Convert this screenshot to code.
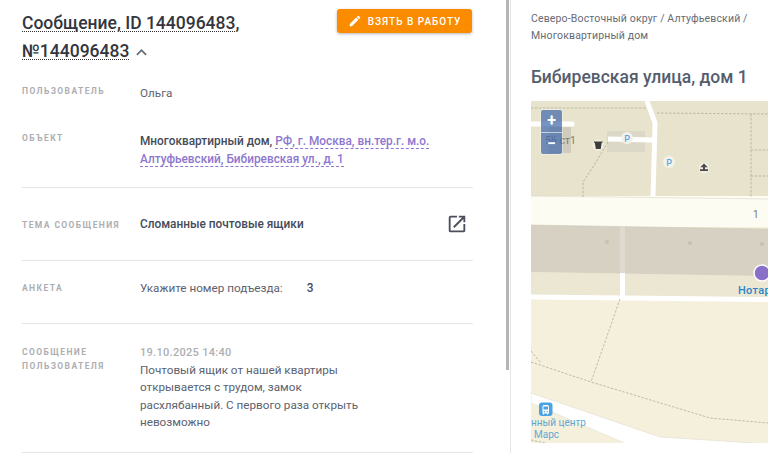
<div class="page">
  <section class="left">
    <header class="head">
      <h1><span class="dotted">Сообщение, ID 144096483, №144096483</span>
        <svg class="chev" viewBox="0 0 24 24" width="21" height="21"><path d="M7.41 15.41 12 10.83l4.59 4.58L18 14l-6-6-6 6z" fill="#666d78"/></svg>
      </h1>
      <button class="take">
        <svg viewBox="0 0 24 24" width="14" height="14"><path fill="#fff" d="M3 17.25V21h3.75L17.81 9.94l-3.75-3.75L3 17.25zM20.71 7.04a1 1 0 0 0 0-1.41l-2.34-2.34a1 1 0 0 0-1.41 0l-1.83 1.83 3.75 3.75 1.83-1.83z"/></svg>
        <span>Взять в работу</span>
      </button>
    </header>

    <div class="row r1">
      <div class="label">Пользователь</div>
      <div class="val">Ольга</div>
    </div>
    <div class="row r2 line">
      <div class="label">Объект</div>
      <div class="val"><b>Многоквартирный дом,</b> <a>РФ, г. Москва, вн.тер.г. м.о. Алтуфьевский, Бибиревская ул., д. 1</a></div>
    </div>
    <div class="row r3 line">
      <div class="label">Тема сообщения</div>
      <div class="val"><b>Сломанные почтовые ящики</b></div>
      <svg class="ext" viewBox="0 0 24 24" width="22" height="22"><path fill="#4a4f5c" d="M19 19H5V5h7V3H5a2 2 0 0 0-2 2v14a2 2 0 0 0 2 2h14a2 2 0 0 0 2-2v-7h-2v7zM14 3v2h3.59l-9.83 9.83 1.41 1.41L19 6.41V10h2V3h-7z"/></svg>
    </div>
    <div class="row r4 line">
      <div class="label">Анкета</div>
      <div class="val quiz"><span>Укажите номер подъезда:</span><b>3</b></div>
    </div>
    <div class="row r5 line">
      <div class="label">Сообщение пользователя</div>
      <div class="val msg">
        <div class="date">19.10.2025 14:40</div>
        Почтовый ящик от нашей квартиры открывается с трудом, замок расхлябанный. С первого раза открыть невозможно
      </div>
    </div>
    <div class="scroll"></div>
  </section>

  <aside class="right">
    <div class="crumbs">Северо-Восточный округ / Алтуфьевский / Многоквартирный дом</div>
    <h2>Бибиревская улица, дом 1</h2>
    <div class="map">
      <svg viewBox="0 0 237 342" width="237" height="342">
        <rect width="237" height="342" fill="#f4f0dc"/>
        <rect width="237" height="97" fill="#e8e3cd"/>
        <rect y="95" width="237" height="31" fill="#fdfcf3"/>
        <path d="M0 95 L237 98" stroke="#d9d5c4" stroke-width=".6"/>
        <path d="M0 171 L237 175 V197 L0 196Z" fill="#ece7d2"/>
        <path d="M0 124 L237 128 V175 L0 171Z" fill="#d6d1c2"/>
        <path d="M0 124 L237 128" stroke="#c9c4b5" stroke-width=".5"/>
        <rect x="89" y="125" width="5" height="47" fill="#dedad0"/>
        <rect x="89" y="172" width="5" height="24" fill="#fff"/>
        <path d="M0 196 L237 198.500" stroke="#fff" stroke-width="5"/>
        <circle cx="76" cy="141" r="2" fill="#c6c1b2"/><circle cx="159" cy="142" r="2" fill="#c6c1b2"/><circle cx="231" cy="143" r="2" fill="#c6c1b2"/>

        <rect x="76" y="30" width="38" height="21" fill="#dcd8c8"/>
        <rect x="18" y="26" width="22" height="26" fill="#cfcbbd"/>
        <path d="M116 0 L124 22 L122 96" stroke="#fff" stroke-width="5" fill="none"/>
        <path d="M0 23 H41" stroke="#fff" stroke-width="5" stroke-linecap="round"/>
        <path d="M77 38 L122 39" stroke="#fff" stroke-width="5"/>
        <g fill="none" stroke="#a8a494" stroke-width=".7" stroke-dasharray="2.500 1.500">
          <path d="M0 7 H115"/><path d="M126 12 L237 13"/>
          <path d="M220 13 V96"/><path d="M220 49 H237"/><path d="M220 75 H237"/>
          <path d="M77 41 L62 66 L52 81 V96"/>
          <path d="M89 198 L60 281"/>
          <path d="M0 261 L60 281 L179 317 L237 322"/>
          <path d="M0 250 L10 262"/>
          <path d="M0 339 L14 342"/>
        </g>
        <path d="M0 292 L129 336 L237 343 V350 H112 L0 302Z" fill="#fff" stroke="#dcd8c8" stroke-width=".5"/>

        <circle cx="96" cy="37" r="6" fill="#f4f2e8"/>
        <text x="96" y="40.500" class="park">P</text>
        <circle cx="138" cy="61" r="6" fill="#f4f2e8"/>
        <text x="138" y="64.500" class="park">P</text>
        <circle cx="67" cy="44" r="5.500" fill="#f4f2e8" opacity=".8"/>
        <path d="M63 40.500h8.500v1.200h-.8l-1 6.300h-4.900l-1-6.300H63z" fill="#3d3d3d"/>
        <circle cx="173" cy="67" r="5.500" fill="#f4f2e8" opacity=".7"/>
        <path d="M173 62.500l3.800 3.800h-2.800v2h3v1.700h-8v-1.700h3v-2h-2.800z" fill="#4a4a4a"/>
        <text x="14" y="42.500" class="bld">56 ст1</text>
        <text x="222" y="117" class="num">1</text>
        <circle cx="231" cy="172" r="8" fill="#8a6fc9" stroke="#fff" stroke-width="1.500"/>
        <text x="207" y="193" class="poi">Нотар</text>
        <rect x="8" y="301.500" width="13.500" height="13.500" rx="3" fill="#4ba3e3"/>
        <path d="M11.500 305.500a1.500 1.500 0 0 1 1.500-1.500h3.500a1.500 1.500 0 0 1 1.500 1.500v7h-1v1h-1v-1h-3v1h-1v-1h-.5z" fill="#fff"/>
        <rect x="12.500" y="305.500" width="4.500" height="3" fill="#4ba3e3"/>
        <circle cx="13.300" cy="310.800" r=".7" fill="#4ba3e3"/><circle cx="16.200" cy="310.800" r=".7" fill="#4ba3e3"/>
        <text x="0" y="324.500" class="trc">нный центр</text>
        <text x="3" y="337" class="trc">Марс</text>
      </svg>
      <div class="zoomctl"><span>+</span><span>−</span></div>
    </div>
  </aside>
</div>

<style>
  :global(body) { margin: 0; background: #fff; }
  .page { width: 768px; height: 453px; overflow: hidden; display: flex; font-family: Roboto, sans-serif; }
  .left { width: 511px; box-sizing: border-box; padding: 0 37px 0 22px; border-right: 1px solid #e4e4e4; position: relative; flex: none; }
  .scroll { position: absolute; right: 1px; top: 0; width: 3px; height: 370px; background: #b4b4b4; }
  .head { display: flex; justify-content: space-between; align-items: flex-start; height: 81px; }
  h1 { margin: 9px 0 0; width: 260px; font-size: 17.500px; line-height: 28px; font-weight: 500; color: #33363d; }
  .dotted { text-decoration: underline dotted #333 1px; text-underline-offset: 2px; }
  .chev { vertical-align: -6px; margin-left: -3px; }
  .take { margin: 9px 1px 0 0; width: 135px; height: 24px; flex: none; border: 0; border-radius: 3px; background: #fb8c00; color: #fff; display: flex; align-items: center; justify-content: center; gap: 6px; padding: 0; font: 500 10px Roboto, sans-serif; letter-spacing: 1px; text-transform: uppercase; box-shadow: 0 1px 3px rgba(0,0,0,.3); }
  .row { display: grid; grid-template-columns: 118px 1fr; position: relative; box-sizing: border-box; }
  .line { border-bottom: 1px solid #e6e6e6; }
  .label { font-size: 8.500px; font-weight: 700; letter-spacing: 1.400px; text-transform: uppercase; color: #aeaeb2; line-height: 13.500px; }
  .val { font-size: 11.700px; line-height: 18px; color: #5b6270; }
  .val b { font-weight: 500; color: #454b59; font-size: 11.850px; }
  .val a { font-weight: 500; color: #8d77cf; border-bottom: 1px dashed #8d77cf; font-size: 11.850px; }
  .r1 { height: 51px; padding-top: 3px; }
  .r2 { height: 56px; }
  .r3 { height: 73px; padding-top: 27px; }
  .r4 { height: 63px; padding-top: 18px; }
  .r5 { height: 129px; padding-top: 21px; }
  .r1 .label { padding-top: 1px; }
  .r3 .label { padding-top: 4px; }
  .r4 .label { padding-top: 3px; }
  .r5 .label { padding-top: 1px; }
  .ext { position: absolute; right: 5px; top: 25px; }
  .quiz { display: flex; gap: 24px; }
  .msg { width: 235px; line-height: 17.500px; }
  .date { color: #aeaeb2; font-weight: 500; font-size: 11px; letter-spacing: .3px; margin-top: -1px; }
  .right { flex: 1; min-width: 0; padding: 10px 0 0 20px; position: relative; }
  .crumbs { width: 232px; font-size: 10.500px; line-height: 17px; letter-spacing: .15px; color: #666b76; }
  h2 { margin: 21px 0 12px; font-size: 17.500px; line-height: 24px; font-weight: 500; color: #555e6e; white-space: nowrap; }
  .map { position: relative; width: 237px; height: 342px; overflow: hidden; }
  .map svg { display: block; }
  .zoomctl { position: absolute; left: 10px; top: 9px; width: 21px; height: 44px; border-radius: 2px; background: rgba(65,105,170,.72); box-shadow: 0 0 0 1px rgba(255,255,255,.35); display: flex; flex-direction: column; color: #fff; font-size: 16px; font-weight: 700; }
  .zoomctl span { height: 22px; display: flex; align-items: center; justify-content: center; }
  .zoomctl span:first-child { border-bottom: 1px solid rgba(255,255,255,.6); }
  .park { font: 500 9px Roboto, sans-serif; fill: #5aa9e6; text-anchor: middle; }
  .bld { font: 10.500px Roboto, sans-serif; fill: #7d7d78; }
  .num { font: 10px Roboto, sans-serif; fill: #777; }
  .poi { font: 500 11px Roboto, sans-serif; fill: #2a86c8; letter-spacing: .3px; }
  .trc { font: 10px Roboto, sans-serif; fill: #5fa8d3; }
</style>
